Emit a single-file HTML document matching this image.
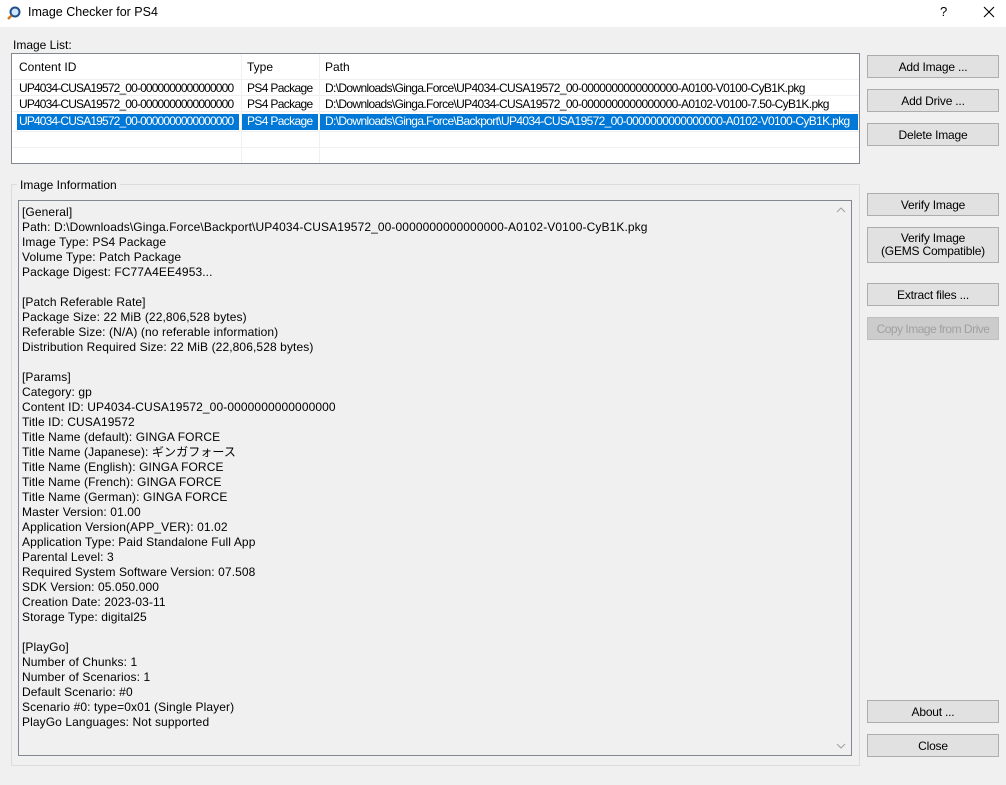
<!DOCTYPE html>
<html><head><meta charset="utf-8"><style>
*{margin:0;padding:0;box-sizing:border-box}
body{width:1006px;height:785px;background:#f0f0f0;font-family:"Liberation Sans","Noto Sans CJK JP",sans-serif;font-size:12px;color:#000;position:relative;overflow:hidden}
.title{position:absolute;left:0;top:0;width:1006px;height:27px;background:#fff}
.title .t{position:absolute;left:28px;top:5px;font-size:12.5px}
.abs{position:absolute}
.btn{position:absolute;left:867px;width:132px;height:23px;background:#e1e1e1;border:1px solid #adadad;text-align:center;line-height:22px;font-size:12px;letter-spacing:-0.2px}
.list{position:absolute;left:11px;top:53px;width:849px;height:111px;background:#fff;border:1px solid #828790;overflow:hidden}
.row{position:absolute;left:5px;height:15px;line-height:15px;white-space:nowrap;letter-spacing:-0.65px}
.row span{position:absolute;top:0;overflow:hidden}
.c1{left:2px;width:222px;letter-spacing:-0.85px}.c2{left:230px;width:76px}.c3{left:308px;width:540px}
.sel{background:#0078d7;color:#fff}
.grp{position:absolute;left:11px;top:184px;width:849px;height:582px;border:1px solid #dcdcdc}
.txt{position:absolute;left:18px;top:200px;width:834px;height:556px;background:#f0f0f0;border:1px solid #828790}
.txt pre{font-family:inherit;font-size:12px;line-height:15px;position:absolute;left:3px;top:4px;letter-spacing:0.1px}
</style></head><body>
<div class="title"><svg class="abs" style="left:6px;top:5px" width="16" height="16"><circle cx="9" cy="7" r="4.5" fill="#cfe6fb" stroke="#1e4f8a" stroke-width="2"/><line x1="5.5" y1="10.5" x2="2" y2="14" stroke="#d07a20" stroke-width="2.5"/></svg><span class="t">Image Checker for PS4</span>
<span class="abs" style="left:940px;top:4px;font-size:13px">?</span>
<svg class="abs" style="left:983px;top:6px" width="12" height="12"><path d="M1 1L11 11M11 1L1 11" stroke="#000" stroke-width="1.1"/></svg></div>
<div class="abs" style="left:13px;top:38px">Image List:</div>
<div class="list">
<div class="abs" style="left:229px;top:0;width:1px;height:109px;background:#f0f0f0"></div>
<div class="abs" style="left:307px;top:0;width:1px;height:109px;background:#f0f0f0"></div>
<div class="abs" style="left:0;top:25px;width:847px;height:1px;background:#f0f0f0"></div>
<div class="abs" style="left:0;top:41px;width:847px;height:1px;background:#f0f0f0"></div>
<div class="abs" style="left:0;top:57px;width:847px;height:1px;background:#f0f0f0"></div>
<div class="abs" style="left:0;top:77px;width:847px;height:1px;background:#f0f0f0"></div>
<div class="abs" style="left:0;top:93px;width:847px;height:1px;background:#f0f0f0"></div>
<div class="row" style="top:6px;letter-spacing:0"><span class="c1" style="letter-spacing:0">Content ID</span><span class="c2">Type</span><span class="c3">Path</span></div>
<div class="row" style="top:27px"><span class="c1">UP4034-CUSA19572_00-0000000000000000</span><span class="c2">PS4 Package</span><span class="c3">D:\Downloads\Ginga.Force\UP4034-CUSA19572_00-0000000000000000-A0100-V0100-CyB1K.pkg</span></div>
<div class="row" style="top:43px"><span class="c1">UP4034-CUSA19572_00-0000000000000000</span><span class="c2">PS4 Package</span><span class="c3">D:\Downloads\Ginga.Force\UP4034-CUSA19572_00-0000000000000000-A0102-V0100-7.50-CyB1K.pkg</span></div>
<div class="abs sel" style="left:5px;top:60px;width:222px;height:16px"></div>
<div class="abs sel" style="left:230px;top:60px;width:76px;height:16px"></div>
<div class="abs sel" style="left:308px;top:60px;width:538px;height:16px"></div>
<div class="row" style="top:60px;color:#fff"><span class="c1">UP4034-CUSA19572_00-0000000000000000</span><span class="c2">PS4 Package</span><span class="c3">D:\Downloads\Ginga.Force\Backport\UP4034-CUSA19572_00-0000000000000000-A0102-V0100-CyB1K.pkg</span></div>
</div>
<div class="grp"></div>
<div class="abs" style="left:17px;top:178px;background:#f0f0f0;padding:0 3px">Image Information</div>
<div class="txt"><pre>[General]
Path: D:\Downloads\Ginga.Force\Backport\UP4034-CUSA19572_00-0000000000000000-A0102-V0100-CyB1K.pkg
Image Type: PS4 Package
Volume Type: Patch Package
Package Digest: FC77A4EE4953...

[Patch Referable Rate]
Package Size: 22 MiB (22,806,528 bytes)
Referable Size: (N/A) (no referable information)
Distribution Required Size: 22 MiB (22,806,528 bytes)

[Params]
Category: gp
Content ID: UP4034-CUSA19572_00-0000000000000000
Title ID: CUSA19572
Title Name (default): GINGA FORCE
Title Name (Japanese): ギンガフォース
Title Name (English): GINGA FORCE
Title Name (French): GINGA FORCE
Title Name (German): GINGA FORCE
Master Version: 01.00
Application Version(APP_VER): 01.02
Application Type: Paid Standalone Full App
Parental Level: 3
Required System Software Version: 07.508
SDK Version: 05.050.000
Creation Date: 2023-03-11
Storage Type: digital25

[PlayGo]
Number of Chunks: 1
Number of Scenarios: 1
Default Scenario: #0
Scenario #0: type=0x01 (Single Player)
PlayGo Languages: Not supported</pre>
<svg class="abs" style="left:817px;top:5px" width="10" height="8"><path d="M1 6L5 2L9 6" stroke="#a0a0a0" fill="none"/></svg>
<svg class="abs" style="left:817px;top:541px" width="10" height="8"><path d="M1 2L5 6L9 2" stroke="#a0a0a0" fill="none"/></svg>
</div>
<div class="btn" style="top:55px">Add Image ...</div>
<div class="btn" style="top:89px">Add Drive ...</div>
<div class="btn" style="top:123px">Delete Image</div>
<div class="btn" style="top:193px">Verify Image</div>
<div class="btn" style="top:227px;height:36px;line-height:13px;padding-top:4px">Verify Image<br>(GEMS Compatible)</div>
<div class="btn" style="top:283px">Extract files ...</div>
<div class="btn" style="top:317px;background:#cccccc;border-color:#bfbfbf;color:#a0a0a0;letter-spacing:-0.5px">Copy Image from Drive</div>
<div class="btn" style="top:700px">About ...</div>
<div class="btn" style="top:734px">Close</div>
</body></html>
